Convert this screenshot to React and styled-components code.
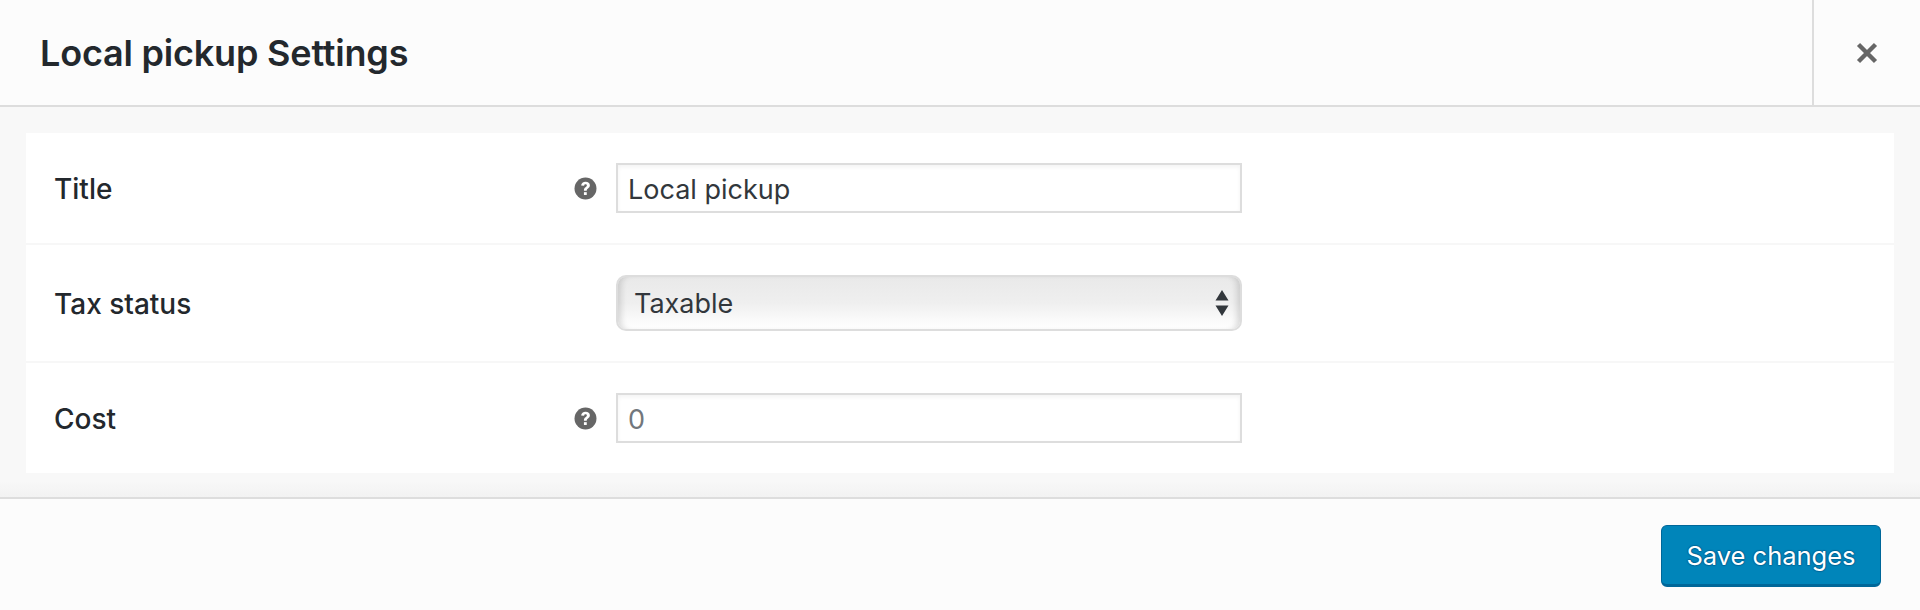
import React from 'react';
import styled, { createGlobalStyle } from 'styled-components';

const GlobalStyle = createGlobalStyle`
  html, body {
    margin: 0;
    padding: 0;
    background: #fcfcfc;
    font-family: Inter, "Liberation Sans", sans-serif;
  }
  * {
    box-sizing: border-box;
  }
`;

const Modal = styled.div`
  width: 1920px;
  height: 610px;
  display: flex;
  flex-direction: column;
  background: #f8f8f8;
`;

const Header = styled.header`
  height: 107px;
  display: flex;
  align-items: stretch;
  justify-content: space-between;
  background: #fcfcfc;
  border-bottom: 2px solid #dddddd;
`;

const Heading = styled.h1`
  margin: 0;
  padding: 0 0 0 40px;
  align-self: center;
  font-size: 36px;
  line-height: 44px;
  font-weight: 600;
  letter-spacing: -0.2px;
  color: #23282d;
`;

const CloseButton = styled.button`
  width: 108px;
  padding: 0;
  display: flex;
  align-items: center;
  justify-content: center;
  background: none;
  border: none;
  border-left: 2px solid #dddddd;
  color: #666666;
`;

const Body = styled.main`
  flex: 0 0 390px;
  padding: 26px 26px 0;
  background: linear-gradient(#f8f8f8 0, #f8f8f8 calc(100% - 16px), #f2f2f2 100%);
`;

const Panel = styled.section`
  background: #ffffff;
`;

const Row = styled.div`
  display: flex;
  align-items: center;
  padding: 30px 0 30px 28px;
  border-bottom: ${p => (p.$last ? 'none' : '2px solid #f7f7f7')};
`;

const Label = styled.label`
  width: 520px;
  padding-top: 2px;
  font-size: 28px;
  line-height: 32px;
  font-weight: 500;
  color: #23282d;
`;

const HelpSlot = styled.span`
  width: 42px;
  display: flex;
  color: #666666;
`;

const TextInput = styled.input`
  width: 626px;
  height: 50px;
  padding: 2px 10px 0;
  font-family: inherit;
  font-size: 27px;
  color: #32373c;
  background: #ffffff;
  border: 2px solid #dddddd;
  border-radius: 0;
  box-shadow: inset 0 2px 4px rgba(0, 0, 0, 0.05);
  outline: none;

  &::placeholder {
    color: #72777c;
    opacity: 1;
  }
`;

const SelectWrap = styled.div`
  position: relative;
  width: 626px;
  height: 56px;
`;

const Select = styled.select`
  width: 100%;
  height: 100%;
  padding: 0 40px 0 16px;
  appearance: none;
  font-family: inherit;
  font-size: 27px;
  color: #32373c;
  border: 2px solid #dddddd;
  border-radius: 10px;
  background: linear-gradient(#e9e9e9 0%, #efefef 50%, #fbfbfb 85%, #ffffff 100%);
  box-shadow: inset 7px 0 6px -4px rgba(0, 0, 0, 0.14), inset -7px 0 6px -4px rgba(0, 0, 0, 0.14);
  outline: none;
`;

const SelectArrows = styled.svg`
  position: absolute;
  top: 15px;
  right: 13px;
  pointer-events: none;
`;

const Footer = styled.footer`
  flex: 1;
  display: flex;
  justify-content: flex-end;
  align-items: flex-start;
  padding: 26px 39px 0 0;
  background: #fcfcfc;
  border-top: 2px solid #dddddd;
`;

const SaveButton = styled.button`
  width: 220px;
  height: 62px;
  padding: 0;
  font-family: inherit;
  font-size: 25.5px;
  color: #ffffff;
  background: #0085ba;
  border: 1px solid #006799;
  border-bottom-width: 3px;
  border-radius: 6px;
  text-shadow: 0 -1px 1px #006799, 1px 0 1px #006799, 0 1px 1px #006799, -1px 0 1px #006799;
`;

const HelpIcon = () => (
  <svg width="23" height="23" viewBox="0 0 22 22" aria-hidden="true">
    <circle cx="11" cy="11" r="10.5" fill="currentColor" />
    <path
      d="M6.8 8.2c.2-2.3 1.9-3.7 4.3-3.7 2.4 0 4.1 1.4 4.1 3.4 0 1.5-.8 2.3-1.8 3-1 .7-1.2 1-1.2 1.9v.3H9.5v-.6c0-1.4.5-2.1 1.5-2.8.9-.6 1.3-1 1.3-1.6 0-.7-.5-1.1-1.2-1.1-.8 0-1.3.5-1.4 1.3z"
      fill="#fff"
    />
    <rect x="9.5" y="14.5" width="2.7" height="2.7" fill="#fff" />
  </svg>
);

const fields = [
  { id: 'title', label: 'Title', value: 'Local pickup' },
  { id: 'cost', label: 'Cost', placeholder: '0' },
];

const Field = ({ id, label, value, placeholder, last }) => (
  <Row $last={last}>
    <Label htmlFor={id}>{label}</Label>
    <HelpSlot>
      <HelpIcon />
    </HelpSlot>
    <TextInput id={id} defaultValue={value} placeholder={placeholder} />
  </Row>
);

const App = () => (
  <Modal>
    <GlobalStyle />
    <Header>
      <Heading>Local pickup Settings</Heading>
      <CloseButton aria-label="Close">
        <svg width="22" height="22" viewBox="0 0 22 22" aria-hidden="true">
          <path d="M2.5 2.5l17 17M19.5 2.5l-17 17" stroke="currentColor" strokeWidth="4.4" fill="none" />
        </svg>
      </CloseButton>
    </Header>
    <Body>
      <Panel>
        <Field {...fields[0]} />
        <Row>
          <Label htmlFor="tax">Tax status</Label>
          <HelpSlot />
          <SelectWrap>
            <Select id="tax" defaultValue="taxable">
              <option value="taxable">Taxable</option>
              <option value="none">None</option>
            </Select>
            <SelectArrows width="14" height="26" viewBox="0 0 14 26" aria-hidden="true">
              <path d="M7 0l6.5 10.5H.5zM7 26L.5 15.5h13z" fill="#32373c" />
            </SelectArrows>
          </SelectWrap>
        </Row>
        <Field {...fields[1]} last />
      </Panel>
    </Body>
    <Footer>
      <SaveButton>Save changes</SaveButton>
    </Footer>
  </Modal>
);

export default App;
